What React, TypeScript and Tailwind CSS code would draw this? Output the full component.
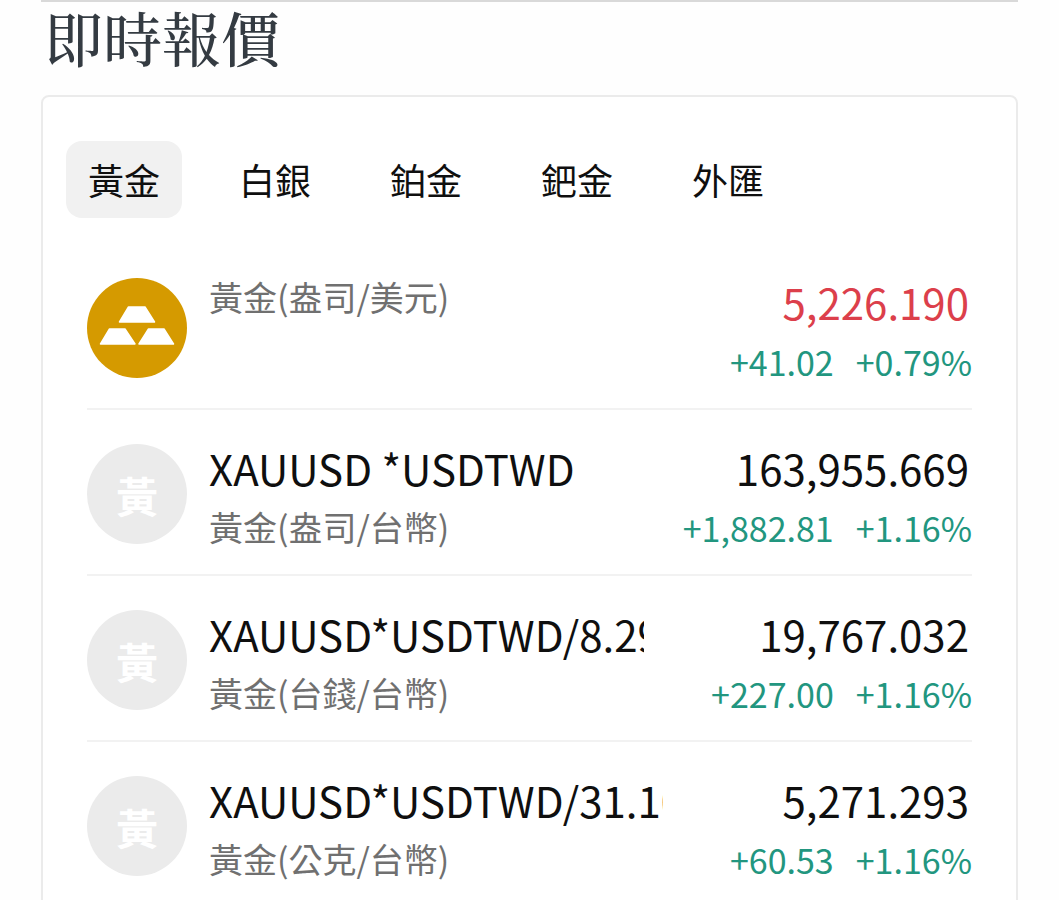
import { useState } from "react";

interface Quote {
  symbol: string;
  name: string;
  price: string;
  change: string;
  percent: string;
  gold?: boolean;
  falling?: boolean;
}

const tabs = ["黃金", "白銀", "鉑金", "鈀金", "外匯"];

const quotes: Quote[] = [
  { symbol: "", name: "黃金(盎司/美元)", price: "5,226.190", change: "+41.02", percent: "+0.79%", gold: true, falling: true },
  { symbol: "XAUUSD *USDTWD", name: "黃金(盎司/台幣)", price: "163,955.669", change: "+1,882.81", percent: "+1.16%" },
  { symbol: "XAUUSD*USDTWD/8.29", name: "黃金(台錢/台幣)", price: "19,767.032", change: "+227.00", percent: "+1.16%" },
  { symbol: "XAUUSD*USDTWD/31.10", name: "黃金(公克/台幣)", price: "5,271.293", change: "+60.53", percent: "+1.16%" },
];

function GoldIcon() {
  return (
    <svg className="mt-2 size-[100px] shrink-0" viewBox="0 0 100 100" aria-hidden="true">
      <circle cx="50" cy="50" r="50" fill="#d59a00" />
      <g fill="#fff" stroke="#fff" strokeWidth="1.5" strokeLinejoin="round">
        <path d="M41.5 29h16.5L67.5 44H32.5z" />
        <path d="M22.5 51h15.5L48 66H13.5z" />
        <path d="M61.5 51h15.5L86.5 66H52z" />
      </g>
    </svg>
  );
}

function QuoteRow({ quote }: { quote: Quote }) {
  return (
    <li className="flex items-start gap-[22px] border-b-2 border-[#f2f2f2] pt-[26px] pb-4 last:border-transparent">
      {quote.gold ? (
        <GoldIcon />
      ) : (
        <div className="mt-2 flex size-[100px] shrink-0 items-center justify-center rounded-full bg-[#ebebeb] text-[42px] font-bold text-white">
          {quote.name[0]}
        </div>
      )}

      <div className="flex h-[122px] min-w-0 flex-1 items-start justify-between gap-[67px] whitespace-nowrap">
        <div className="min-w-0 overflow-hidden">
          {quote.symbol && (
            <div className="overflow-hidden text-[42px] leading-[64px] text-[#0f0f0f]">{quote.symbol}</div>
          )}
          <div className="text-[34px] leading-[54px] text-[#707070]">{quote.name}</div>
        </div>

        <div className="shrink-0 text-right">
          <div className={`pr-[3px] text-[42px] leading-[64px] ${quote.falling ? "text-[#dc3f4b]" : "text-[#0f0f0f]"}`}>
            {quote.price}
          </div>
          <div className="flex justify-end gap-[22px] text-[34px] leading-[56px] text-[#22967f]">
            <span>{quote.change}</span>
            <span>{quote.percent}</span>
          </div>
        </div>
      </div>
    </li>
  );
}

export default function App() {
  const [active, setActive] = useState(tabs[0]);

  return (
    <main
      lang="zh-Hant"
      className="min-h-screen bg-[#fefefe] px-[41px] font-['Noto_Sans_CJK_TC',sans-serif]"
    >
      <hr className="h-0 border-t-2 border-[#d9d9d9]" />
      <h1 className="mb-[23px] pl-[3px] font-['Noto_Serif_CJK_TC','Liberation_Serif',serif] text-[59px] leading-[70px] font-medium text-[#343b42]">
        即時報價
      </h1>

      <section className="rounded-lg border-2 border-[#ebebeb] bg-white pt-11">
        <div role="tablist" className="mb-[26px] flex gap-[35px] px-[23px]">
          {tabs.map(tab => (
            <button
              key={tab}
              role="tab"
              aria-selected={tab === active}
              onClick={() => setActive(tab)}
              className={`h-[77px] rounded-2xl px-[22px] pb-[2px] text-[36px] text-[#0f0f0f] ${tab === active ? "bg-[#f1f1f1]" : ""}`}
            >
              {tab}
            </button>
          ))}
        </div>

        <ul className="px-11">
          {quotes.map(quote => (
            <QuoteRow key={quote.name} quote={quote} />
          ))}
        </ul>
      </section>
    </main>
  );
}
